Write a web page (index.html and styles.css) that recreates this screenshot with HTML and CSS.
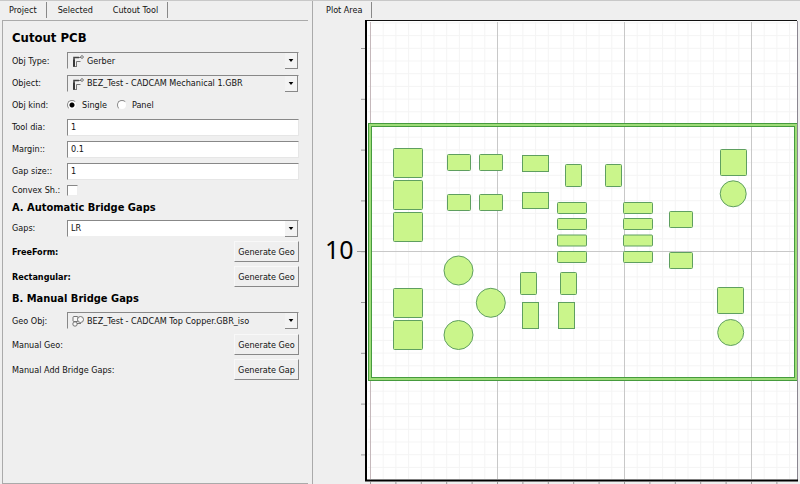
FILE: index.html
```
<!DOCTYPE html>
<html lang="en">
<head>
<meta charset="utf-8">
<title>Cutout Tool</title>
<link rel="stylesheet" href="styles.css">
</head>
<body>
<div class="app">
  <section class="side">
    <nav class="tabs">
      <button class="tab" type="button">Project</button>
      <button class="tab plain" type="button">Selected</button>
      <button class="tab active" type="button">Cutout Tool</button>
    </nav>
    <form class="panel">
      <h1>Cutout PCB</h1>

      <label for="type">Obj Type:</label>
      <div class="combo">
        <svg class="icon" viewBox="0 0 12 12"><path d="M4.500 11V6.500H8.500M1 11.500H5M3 2.500H9" fill="none" stroke="#777"/><path d="M2 11.500V4.500" stroke="#222" stroke-width="1.800"/><path d="M2 5V2.500H7" fill="none" stroke="#444" stroke-width="1.600"/><circle cx="10" cy="2" r="1.300" fill="#fff" stroke="#555" stroke-width=".8"/></svg>
        <select id="type" class="with-icon"><option>Gerber</option></select>
        <svg class="arrow" viewBox="0 0 13 15"><path d="M4 6h5l-2.500 3z"/></svg>
      </div>

      <label for="object">Object:</label>
      <div class="combo">
        <svg class="icon" viewBox="0 0 12 12"><path d="M4.500 11V6.500H8.500M1 11.500H5M3 2.500H9" fill="none" stroke="#777"/><path d="M2 11.500V4.500" stroke="#222" stroke-width="1.800"/><path d="M2 5V2.500H7" fill="none" stroke="#444" stroke-width="1.600"/><circle cx="10" cy="2" r="1.300" fill="#fff" stroke="#555" stroke-width=".8"/></svg>
        <select id="object" class="with-icon"><option>BEZ_Test - CADCAM Mechanical 1.GBR</option></select>
        <svg class="arrow" viewBox="0 0 13 15"><path d="M4 6h5l-2.500 3z"/></svg>
      </div>

      <span>Obj kind:</span>
      <div class="radios">
        <label><input type="radio" name="kind" checked>Single</label>
        <label><input type="radio" name="kind">Panel</label>
      </div>

      <label for="dia">Tool dia:</label>
      <input id="dia" class="text" type="text" value="1">
      <label for="margin">Margin::</label>
      <input id="margin" class="text" type="text" value="0.1">
      <label for="gap">Gap size::</label>
      <input id="gap" class="text" type="text" value="1">
      <label for="convex">Convex Sh.:</label>
      <input id="convex" class="check" type="checkbox">

      <h2>A. Automatic Bridge Gaps</h2>
      <label for="gaps">Gaps:</label>
      <div class="combo">
        <select id="gaps" class="white"><option>LR</option></select>
        <svg class="arrow" viewBox="0 0 13 15"><path d="M4 6h5l-2.500 3z"/></svg>
      </div>
      <div class="action"><strong>FreeForm:</strong><button type="button">Generate Geo</button></div>
      <div class="action"><strong>Rectangular:</strong><button type="button">Generate Geo</button></div>

      <h2>B. Manual Bridge Gaps</h2>
      <label for="geo">Geo Obj:</label>
      <div class="combo">
        <svg class="icon" viewBox="0 0 12 12"><g fill="#f8f8f8" stroke="#666" stroke-width=".9"><rect x="1" y="1.500" width="5" height="5" rx="1"/><circle cx="8.500" cy="4.500" r="3"/><circle cx="3" cy="9" r="2.200"/><path d="M5 8.500h4"/></g></svg>
        <select id="geo" class="with-icon"><option>BEZ_Test - CADCAM Top Copper.GBR_iso</option></select>
        <svg class="arrow" viewBox="0 0 13 15"><path d="M4 6h5l-2.500 3z"/></svg>
      </div>
      <div class="action"><span>Manual Geo:</span><button type="button">Generate Geo</button></div>
      <div class="action"><span>Manual Add Bridge Gaps:</span><button type="button">Generate Gap</button></div>
    </form>
  </section>

  <section class="plot">
    <nav class="tabs">
      <button class="tab active" type="button">Plot Area</button>
    </nav>
    <svg class="canvas" viewBox="320 18 480 466" role="img" aria-label="PCB plot">
      <defs>
        <pattern id="minor" x="370" y="251" width="12.700" height="12.700" patternUnits="userSpaceOnUse">
          <path d="M.5 0V12.700M0 .5H12.700" stroke="#f4f4f4" fill="none"/>
        </pattern>
        <pattern id="ticks-y" x="361" y="48" width="4" height="50.800" patternUnits="userSpaceOnUse">
          <path d="M0 .5H4" stroke="#999"/>
        </pattern>
        <pattern id="ticks-x" x="370" y="482" width="25.400" height="3" patternUnits="userSpaceOnUse">
          <path d="M.5 0V3" stroke="#999"/>
        </pattern>
      </defs>
      <rect x="366" y="21" width="431" height="459" fill="#fff"/>
      <rect x="368" y="22" width="429" height="457" fill="url(#minor)"/>
      <rect x="361" y="48" width="4" height="432" fill="url(#ticks-y)"/>
      <rect x="370" y="482" width="427" height="2" fill="url(#ticks-x)"/>
      <path d="M497.500 22V479M624.500 22V479M751.500 22V479M368 251.500H797" stroke="#c8c8c8" fill="none"/>
      <path d="M370.500 22V479" stroke="#c5b8bb"/>
      <path d="M357 251.500H365" stroke="#999"/>
      <rect x="370" y="125" width="426" height="254" fill="none" stroke="#469b3e" stroke-width="4"/>
      <rect x="370" y="125" width="426" height="254" fill="none" stroke="#9edc78" stroke-width="2"/>
      <g class="pads">
        <rect x="393.500" y="148.500" width="29" height="29" rx="1"/>
        <rect x="393.500" y="180.500" width="29" height="29" rx="1"/>
        <rect x="393.500" y="212.500" width="29" height="29" rx="1"/>
        <rect x="393.500" y="288.500" width="29" height="29" rx="1"/>
        <rect x="393.500" y="320.500" width="29" height="29" rx="1"/>
        <rect x="447.500" y="154.500" width="23" height="16" rx="1"/>
        <rect x="479.500" y="154.500" width="23" height="16" rx="1"/>
        <rect x="447.500" y="194.500" width="23" height="16" rx="1"/>
        <rect x="479.500" y="194.500" width="23" height="16" rx="1"/>
        <rect x="522.500" y="155.500" width="26" height="16"/>
        <rect x="522.500" y="192.500" width="26" height="16"/>
        <rect x="565.500" y="164.500" width="16" height="22" rx="1"/>
        <rect x="605.500" y="164.500" width="16" height="22" rx="1"/>
        <rect x="557.500" y="202.500" width="29" height="11" rx="1"/>
        <rect x="557.500" y="218.500" width="29" height="11" rx="1"/>
        <rect x="557.500" y="235" width="29" height="11" rx="1"/>
        <rect x="557.500" y="251.500" width="29" height="11" rx="1"/>
        <rect x="623.500" y="202.500" width="29" height="11" rx="1"/>
        <rect x="623.500" y="218.500" width="29" height="11" rx="1"/>
        <rect x="623.500" y="235" width="29" height="11" rx="1"/>
        <rect x="623.500" y="251.500" width="29" height="11" rx="1"/>
        <rect x="669.500" y="211.500" width="23" height="16" rx="1"/>
        <rect x="669.500" y="252.500" width="23" height="16" rx="1"/>
        <rect x="520.500" y="272.500" width="16" height="22" rx="1"/>
        <rect x="560.500" y="272.500" width="16" height="22" rx="1"/>
        <rect x="522.500" y="302.500" width="16" height="26"/>
        <rect x="558.500" y="302.500" width="16" height="26"/>
        <rect x="720.500" y="149.500" width="26" height="26" rx="1"/>
        <rect x="717.500" y="287.500" width="26" height="26" rx="1"/>
        <circle cx="458.500" cy="270.500" r="14.500"/>
        <circle cx="490.800" cy="302.800" r="14.500"/>
        <circle cx="458.500" cy="335" r="14.500"/>
        <circle cx="733.200" cy="193.800" r="13"/>
        <circle cx="730.700" cy="332.500" r="13"/>
      </g>
      <path d="M797.500 21V480" stroke="#8a8690"/>
      <path d="M365 20.500H797" stroke="#111"/>
      <path d="M366 20V481" stroke="#000" stroke-width="2"/>
      <path d="M365 480.500H798" stroke="#000" stroke-width="2"/>
      <text class="axis" x="325" y="259">10</text>
    </svg>
  </section>
</div>
</body>
</html>
```
FILE: styles.css
```
* { box-sizing: border-box; }

body {
  margin: 0;
  background: #efefef;
  color: #111;
  font: 9px/12px "DejaVu Sans Condensed", "DejaVu Sans", sans-serif;
  font-stretch: condensed;
}

button, input, select { font: inherit; color: inherit; }

.app {
  display: flex;
  min-height: 100vh;
  border-top: 1px solid #c8c8c8;
}

.side {
  flex: 0 0 313px;
  display: flex;
  flex-direction: column;
  border-right: 1px solid #aaa;
}

.plot { flex: 1; min-width: 0; padding-left: 7px; }

.tabs { display: flex; height: 17px; padding: 1px 0 0; }
.side .tabs { height: 19px; padding: 1px 0 2px; }

.tab {
  border: 0;
  border-right: 1px solid #888;
  background: none;
  padding: 0 9px;
  white-space: nowrap;
}
.tab.plain { border-color: transparent; padding: 0 10px 0 11px; }
.tab.active { padding: 0 9px; }
.plot .tab.active { padding: 0 9px 0 6px; }

.panel {
  flex: 1;
  display: grid;
  grid-template-columns: 55px 1fr;
  grid-template-rows: 28px 23px 22px 22px 22px 22px 22px 16px 19px 22px 25px 25px 20px 23px 25px 25px;
  align-content: start;
  align-items: center;
  margin: 0 4px 0 2px;
  padding: 0 9px;
  border: 1px solid #aaa;
  border-width: 1px 0 1px 1px;
  white-space: nowrap;
}

h1, h2 { grid-column: 1 / -1; margin: 0; color: #000; }
h1 { padding-top: 6px; font-size: 13px; line-height: 18px; }
h2 { font-size: 11px; line-height: 14px; }

.combo { position: relative; display: flex; }

select, .text {
  appearance: none;
  width: 100%;
  height: 17px;
  margin: 0;
  padding: 0 3px;
  border: 1px solid #e6e6e6;
  border-top-color: #888;
  border-left-color: #888;
  border-radius: 0;
  background: #fff;
}
select { background: #efefef; border-right-color: #efefef; border-bottom-color: #efefef; }
select.white { background: #fff; }
select.with-icon { padding-left: 19px; }

.icon { position: absolute; left: 5px; top: 3px; width: 12px; height: 12px; }
.arrow {
  position: absolute;
  right: 1px;
  top: 1px;
  width: 13px;
  height: 16px;
  background: #f3f3f3;
  border-right: 1px solid #888;
  border-bottom: 1px solid #888;
  pointer-events: none;
}

.radios { display: flex; gap: 10px; }
.radios label { display: flex; align-items: center; gap: 5px; }
.radios input {
  appearance: none;
  width: 10px;
  height: 10px;
  margin: 0;
  border: 1px solid #eee;
  border-top-color: #888;
  border-left-color: #888;
  border-radius: 50%;
  background: #fff;
}
.radios input:checked { background: radial-gradient(circle, #000 2px, #fff 3px); }

.check {
  appearance: none;
  width: 11px;
  height: 11px;
  margin: 0;
  border: 1px solid #eee;
  border-top-color: #888;
  border-left-color: #888;
  background: #fff;
}

.action {
  grid-column: 1 / -1;
  display: flex;
  align-items: center;
  justify-content: space-between;
}
.action strong { color: #000; }
.action button {
  width: 65px;
  height: 21px;
  padding: 0;
  border: 1px solid #f8f8f8;
  border-right-color: #888;
  border-bottom-color: #888;
  background: #efefef;
}

.canvas { display: block; width: 100%; }
.pads { fill: #caf58b; stroke: #5f9f60; stroke-width: 1; }
.axis { font: 25px "Noto Sans", "Open Sans", sans-serif; fill: #000; }
```
